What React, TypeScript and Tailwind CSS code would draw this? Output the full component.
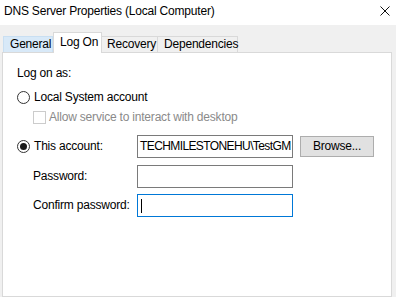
import React from "react";

function Radio({ checked }: { checked?: boolean }) {
  return (
    <div className="w-[13px] h-[13px] rounded-full border border-[#333333] bg-white flex items-center justify-center shrink-0">
      {checked && <div className="w-[7px] h-[7px] rounded-full bg-[#1a1a1a]" />}
    </div>
  );
}

export default function App() {
  return (
    <div
      className="w-[396px] h-[297px] bg-[#f0f0f0] overflow-hidden flex flex-col text-[12px] leading-[15px] tracking-[-0.2px] text-black"
      style={{ fontFamily: '"Liberation Sans", Arial, sans-serif' }}
    >
      {/* Title bar */}
      <div className="h-[25px] bg-white flex items-start justify-between shrink-0">
        <span className="ml-[4px] mt-[4px]">DNS Server Properties (Local Computer)</span>
        <svg width="10" height="10" viewBox="0 0 10 10" className="mt-[6px] mr-[6px]">
          <path d="M0.5 0.5 L9.5 9.5 M9.5 0.5 L0.5 9.5" stroke="#111" strokeWidth="1" fill="none" />
        </svg>
      </div>

      {/* Tabs */}
      <div className="flex items-end h-[20px] mt-[7px] pl-[3px] shrink-0 relative z-10">
        <div className="w-[50px] h-[16px] bg-[#d8e9f8] border border-b-0 border-[#c9dff2] pl-[6px] leading-[15px]">
          General
        </div>
        <div className="w-[49px] h-[21px] -mb-px bg-white border border-b-0 border-[#d9d9d9] pl-[6px] pt-[2px]">
          Log On
        </div>
        <div className="w-[56px] h-[16px] bg-[#f0f0f0] border border-b-0 border-l-0 border-[#d9d9d9] pl-[5px]">
          Recovery
        </div>
        <div className="w-[80px] h-[16px] bg-[#f0f0f0] border border-b-0 border-l-0 border-[#d9d9d9] pl-[6px]">
          Dependencies
        </div>
      </div>

      {/* Panel */}
      <div className="ml-[2px] w-[390px] flex-1 bg-white border border-[#d9d9d9] flex flex-col pl-[14px]">
        <div className="mt-[13px]">Log on as:</div>

        <div className="mt-[9px] flex items-center h-[15px]">
          <Radio />
          <span className="ml-[4px]">Local System account</span>
        </div>

        <div className="mt-[5px] flex items-center h-[15px] pl-[16px]">
          <div className="w-[13px] h-[13px] border border-[#cccccc] bg-white shrink-0" />
          <span className="ml-[3px] text-[#8a8a8a]">Allow service to interact with desktop</span>
        </div>

        <div className="mt-[10px] flex items-center h-[23px]">
          <Radio checked />
          <span className="ml-[4px] w-[103px]">This account:</span>
          <div className="w-[156px] h-[23px] border border-[#7a7a7a] bg-white overflow-hidden whitespace-nowrap pl-[2px] leading-[21px] tracking-[-0.6px]">
            TECHMILESTONEHU\TestGM
          </div>
          <div className="ml-[7px] w-[74px] h-[21px] bg-[#e1e1e1] border border-[#adadad] flex items-center justify-center">
            Browse...
          </div>
        </div>

        <div className="mt-[7px] flex items-center h-[23px] pl-[16px]">
          <span className="w-[104px]">Password:</span>
          <div className="w-[156px] h-[23px] border border-[#7a7a7a] bg-white" />
        </div>

        <div className="mt-[6px] flex items-center h-[23px] pl-[16px]">
          <span className="w-[104px]">Confirm password:</span>
          <div className="w-[156px] h-[23px] border border-[#0078d7] bg-white flex items-center pl-[3px]">
            <div className="w-px h-[14px] bg-black" />
          </div>
        </div>
      </div>
    </div>
  );
}
